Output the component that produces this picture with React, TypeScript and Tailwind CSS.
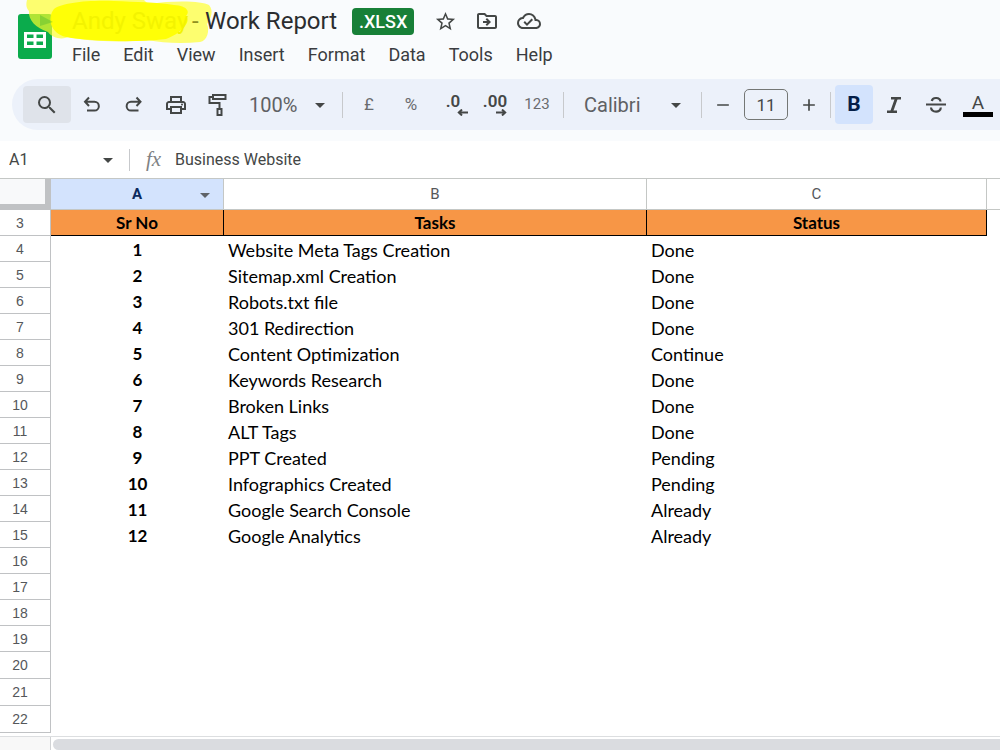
import type { ReactNode } from "react";
import {
  MdAdd,
  MdArrowDropDown,
  MdOutlineCloudDone,
  MdOutlineDriveFileMove,
  MdOutlinePrint,
  MdRemove,
  MdSearch,
  MdStarBorder,
} from "react-icons/md";

const menus = ["File", "Edit", "View", "Insert", "Format", "Data", "Tools", "Help"];

const tasks = [
  ["Website Meta Tags Creation", "Done"],
  ["Sitemap.xml Creation", "Done"],
  ["Robots.txt file", "Done"],
  ["301 Redirection", "Done"],
  ["Content Optimization", "Continue"],
  ["Keywords Research", "Done"],
  ["Broken Links", "Done"],
  ["ALT Tags", "Done"],
  ["PPT Created", "Pending"],
  ["Infographics Created", "Pending"],
  ["Google Search Console", "Already"],
  ["Google Analytics", "Already"],
];

const emptyRows = [16, 17, 18, 19, 20, 21, 22];

function SheetsLogo() {
  return (
    <svg viewBox="0 0 34 45" className="h-[45px] w-[34px]" aria-hidden="true">
      <rect width="34" height="45" rx="3" fill="#0bab4c" />
      <rect x="6" y="18" width="22" height="16" fill="#fff" />
      <path d="M9 20.5h6.5v3.5H9zM18.500 20.500h6.500v3.500h-6.500zM9 27.500h6.500v3.500H9zM18.500 27.500h6.500v3.500h-6.500z" fill="#0bab4c" />
    </svg>
  );
}

function Highlighter() {
  return (
    <svg
      viewBox="0 0 190 44"
      className="absolute -top-[6px] -left-[46px] h-[44px] w-[190px] max-w-none"
      aria-hidden="true"
    >
      <path
        d="M1 0H118L122 4C150 0 176 1 183 5C188 11 185 18 181 24C184 31 181 41 174 42C156 44 136 43 122 40C92 43 60 41 42 37C36 40 26 38 22 32C10 28 2 20 3 11C0 8 0 4 1 0Z"
        fill="#ffff2b"
        fillOpacity=".68"
      />
      <path
        d="M28 9C36 3 60 0 88 1C110 2 130 2 148 5C162 6 164 12 160 16C166 22 154 34 140 39C108 43 62 41 40 37C24 33 21 18 28 9Z"
        fill="#ffff00"
        fillOpacity=".95"
      />
      <path d="M14 15L27 22L14 26Z" fill="#3cb030" fillOpacity=".35" />
    </svg>
  );
}

function UndoIcon() {
  return (
    <svg viewBox="0 0 20 18" className="h-[18px] w-5" fill="none" stroke="currentColor" strokeWidth="2" aria-hidden="true">
      <path d="M7 1.500L3 5.800L7 10M3.500 5.800H12.500A4.300 4.300 0 0 1 12.500 14.500H5" />
    </svg>
  );
}

function RedoIcon() {
  return (
    <svg viewBox="0 0 20 18" className="h-[18px] w-5" fill="none" stroke="currentColor" strokeWidth="2" aria-hidden="true">
      <path d="M12.500 1.500L16.500 5.800L12.500 10M16 5.800H7A4.300 4.300 0 0 0 7 14.500H14.500" />
    </svg>
  );
}

function RollerIcon() {
  return (
    <svg viewBox="0 0 20 24" className="h-6 w-5" fill="none" stroke="currentColor" strokeWidth="2" aria-hidden="true">
      <path d="M5 2H17.500V6H5ZM5 4H1.500V10H11.500V15M9.500 16H13.500V22H9.500Z" />
    </svg>
  );
}

function ItalicIcon() {
  return (
    <svg viewBox="0 0 14 16" className="h-4 w-[14px]" fill="none" stroke="currentColor" aria-hidden="true">
      <path d="M4 1.300H14M0 14.700H10" strokeWidth="2.500" />
      <path d="M9.300 1.500L4.700 14.500" strokeWidth="2.800" />
    </svg>
  );
}

function StrikeIcon() {
  return (
    <svg viewBox="0 0 20 18" className="h-[18px] w-5" fill="none" stroke="currentColor" strokeWidth="2.200" aria-hidden="true">
      <path d="M0 8.500H20" />
      <path d="M14.500 5.500C14 1 6.500.8 5.800 5M5 11.500C5.500 17 14.800 17 14.800 11.500" />
    </svg>
  );
}

function DecimalIcon({ digits, increase }: { digits: string; increase?: boolean }) {
  return (
    <span className="flex flex-col items-end">
      <span className="text-[17px] leading-[16px] font-semibold">{digits}</span>
      <svg
        viewBox="0 0 11 7"
        className={increase ? "h-[7px] w-[11px]" : "-mr-2 h-[7px] w-[11px]"}
        fill="none"
        stroke="currentColor"
        strokeWidth="2"
        aria-hidden="true"
      >
        {increase ? <path d="M0 3.500H9M6 .5L9.200 3.500L6 6.500" /> : <path d="M11 3.500H2M5 .5L1.800 3.500L5 6.500" />}
      </svg>
    </span>
  );
}

function Tool({ label, children }: { label: string; children: ReactNode }) {
  return (
    <button type="button" aria-label={label} className="flex h-9 w-[42px] shrink-0 items-center justify-center">
      {children}
    </button>
  );
}

function Divider() {
  return <span className="h-[26px] w-px shrink-0 bg-[#c7c9cc]" />;
}

function Header() {
  return (
    <header className="flex h-[79px] shrink-0 gap-5 pl-[18px]">
      <div className="pt-[14px]">
        <SheetsLogo />
      </div>
      <div className="flex flex-col pt-[6px]">
        <div className="flex h-[30px] items-center">
          <h1 className="flex items-center text-[24px] leading-[30px] text-[#2b2d30]">
            <span className="relative w-[120px] text-[#f3f300]">
              <Highlighter />
              <span className="relative">Andy Sway</span>
            </span>
            <span className="relative w-[13px] text-[#8f8f20]">-</span>
            <span className="relative">Work Report</span>
          </h1>
          <span className="ml-[15px] flex h-[27px] w-[62px] items-center justify-center rounded-[4px] bg-[#188038] text-[18px] font-medium text-white">
            .XLSX
          </span>
          <div className="ml-[10px] flex text-[#444746]">
            <Tool label="Star">
              <MdStarBorder className="size-[23px]" />
            </Tool>
            <Tool label="Move">
              <MdOutlineDriveFileMove className="size-6" />
            </Tool>
            <Tool label="Document status">
              <MdOutlineCloudDone className="size-6" />
            </Tool>
          </div>
        </div>
        <nav className="relative flex h-9 items-center gap-[23px] text-[18px] text-[#3a3c40]">
          {menus.map((m) => (
            <button type="button" key={m}>
              {m}
            </button>
          ))}
        </nav>
      </div>
    </header>
  );
}

function Toolbar() {
  return (
    <div
      role="toolbar"
      aria-label="Formatting"
      className="ml-3 flex h-[51px] shrink-0 items-center overflow-hidden rounded-l-full bg-[#ecf1fa] pl-[11px] text-[#444746]"
    >
      <button
        type="button"
        aria-label="Search menus"
        className="flex h-[37px] w-12 shrink-0 items-center justify-center rounded-[4px] bg-[#dfe3ea]"
      >
        <MdSearch className="size-6" />
      </button>
      <Tool label="Undo">
        <UndoIcon />
      </Tool>
      <Tool label="Redo">
        <RedoIcon />
      </Tool>
      <Tool label="Print">
        <MdOutlinePrint className="size-6" />
      </Tool>
      <Tool label="Paint format">
        <RollerIcon />
      </Tool>
      <div className="relative w-[103px] shrink-0">
        <select aria-label="Zoom" className="w-full appearance-none bg-transparent pl-[10px] text-[20px] text-[#5f6164]">
          <option>100%</option>
        </select>
        <MdArrowDropDown className="pointer-events-none absolute top-1/2 right-[10px] size-6 -translate-y-1/2" />
      </div>
      <Divider />
      <div className="flex shrink-0 px-[5px] text-[#6a6c6f]">
        <Tool label="Format as currency">
          <span className="text-[17px]">£</span>
        </Tool>
        <Tool label="Format as percent">
          <span className="text-[17px]">%</span>
        </Tool>
        <Tool label="Decrease decimal places">
          <span className="text-[#444746]">
            <DecimalIcon digits=".0" />
          </span>
        </Tool>
        <Tool label="Increase decimal places">
          <span className="text-[#444746]">
            <DecimalIcon digits=".00" increase />
          </span>
        </Tool>
        <Tool label="More formats">
          <span className="text-[15px]">123</span>
        </Tool>
      </div>
      <Divider />
      <div className="relative w-[137px] shrink-0">
        <select aria-label="Font" className="w-full appearance-none bg-transparent pl-5 text-[20px] text-[#5f6164]">
          <option>Calibri</option>
        </select>
        <MdArrowDropDown className="pointer-events-none absolute top-1/2 right-[13px] size-6 -translate-y-1/2" />
      </div>
      <Divider />
      <Tool label="Decrease font size">
        <MdRemove className="size-5" />
      </Tool>
      <input
        aria-label="Font size"
        defaultValue="11"
        className="h-[31px] w-11 shrink-0 rounded-[5px] border border-[#747775] bg-transparent text-center text-[17px]"
      />
      <Tool label="Increase font size">
        <MdAdd className="size-5" />
      </Tool>
      <Divider />
      <button
        type="button"
        aria-label="Bold"
        aria-pressed="true"
        className="ml-1 flex h-[39px] w-[38px] shrink-0 items-center justify-center rounded-[4px] bg-[#d3e3fd] text-[21px] font-bold text-[#041e49]"
      >
        B
      </button>
      <Tool label="Italic">
        <ItalicIcon />
      </Tool>
      <Tool label="Strikethrough">
        <StrikeIcon />
      </Tool>
      <Tool label="Text color">
        <span className="flex flex-col items-center">
          <span className="text-[19px] leading-[19px]">A</span>
          <span className="h-[5px] w-[30px] bg-black" />
        </span>
      </Tool>
    </div>
  );
}

function FormulaBar() {
  return (
    <div className="mt-[11px] flex h-[37px] shrink-0 items-center bg-white text-[16px] text-[#444746]">
      <input aria-label="Name box" defaultValue="A1" className="w-24 bg-transparent pl-[9px]" />
      <button type="button" aria-label="Named ranges">
        <MdArrowDropDown className="size-6" />
      </button>
      <span className="ml-[9px] h-[22px] w-px bg-[#c7c9cc]" />
      <label
        htmlFor="formula"
        className="ml-4 w-[29px] font-['Liberation_Serif',serif] text-[21px] text-[#808284] italic"
      >
        fx
      </label>
      <input id="formula" defaultValue="Business Website" className="min-w-0 flex-1 bg-transparent" />
    </div>
  );
}

const rowHead = "border-r border-b border-[#c0c2c4] pr-[10px] text-center text-[14px] font-normal text-[#55575a] font-['Liberation_Sans',sans-serif]";
const colHead = "border-r border-b border-[#c4c7c5] text-[15px] font-normal text-[#55575a]";
const titleCell = "border-r border-b border-black bg-[#f79646] text-[17px] font-bold";

function Sheet() {
  return (
    <main className="min-h-0 flex-1 overflow-hidden border-t border-[#c4c7c5] bg-white">
      <table className="w-full table-fixed border-separate border-spacing-0 font-[Lato,sans-serif] text-[18px] leading-[20px] text-black">
        <colgroup>
          <col className="w-[51px]" />
          <col className="w-[173px]" />
          <col className="w-[423px]" />
          <col className="w-[340px]" />
          <col />
        </colgroup>
        <thead className="font-[Roboto,sans-serif]">
          <tr className="h-[31px]">
            <td className="border-r-6 border-b-6 border-[#c0c2c4] bg-[#f8f9fa]" />
            <th className="relative border-r border-b border-[#c4c7c5] bg-[#d3e3fd] text-[15px] font-bold text-[#0b2a5e]">
              A
              <MdArrowDropDown className="absolute top-1 right-[6px] size-6 text-[#5f6368]" />
            </th>
            <th className={colHead}>B</th>
            <th className={colHead}>C</th>
            <td className="border-b border-[#c4c7c5]" />
          </tr>
        </thead>
        <tbody>
          <tr className="h-[26px]">
            <th className={rowHead}>3</th>
            <th className={titleCell}>Sr No</th>
            <th className={titleCell}>Tasks</th>
            <th className={titleCell}>Status</th>
            <td />
          </tr>
          {tasks.map(([task, status], i) => (
            <tr key={task} className="h-[26px]">
              <th className={rowHead}>{i + 4}</th>
              <td className="pt-[2px] text-center text-[17px] font-bold">{i + 1}</td>
              <td className="pt-[2px] pl-1">{task}</td>
              <td className="pt-[2px] pl-1">{status}</td>
              <td />
            </tr>
          ))}
          {emptyRows.map((n) => (
            <tr key={n} className={n < 20 ? "h-[26px]" : "h-[27px]"}>
              <th className={rowHead}>{n}</th>
              <td colSpan={4} />
            </tr>
          ))}
        </tbody>
      </table>
    </main>
  );
}

export default function App() {
  return (
    <div className="flex h-screen flex-col overflow-hidden bg-[#f9fbfd] font-[Roboto,sans-serif]">
      <Header />
      <Toolbar />
      <FormulaBar />
      <Sheet />
      <footer className="flex h-[14px] shrink-0 border-t border-[#dcdee0] bg-white">
        <div className="w-[51px] border-r border-[#d0d2d4] bg-[#f8f8f8]" />
        <div className="mt-[2px] ml-[2px] h-[11px] flex-1 rounded-l-full bg-[#dadce0]" />
      </footer>
    </div>
  );
}
